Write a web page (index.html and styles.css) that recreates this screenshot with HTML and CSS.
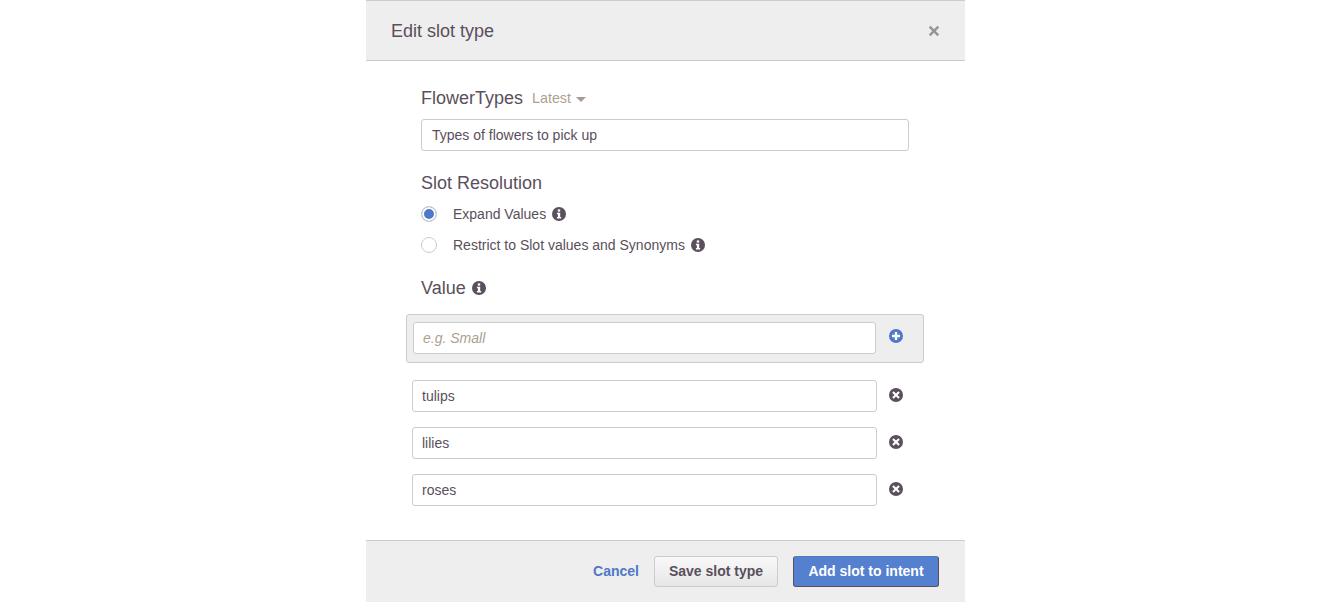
FILE: index.html
```html
<!DOCTYPE html>
<html lang="en">
<head>
<meta charset="utf-8">
<title>Edit slot type</title>
<link rel="stylesheet" href="styles.css">
</head>
<body>
<svg class="defs" width="0" height="0" aria-hidden="true">
  <symbol id="info" viewBox="0 0 14 14">
    <circle cx="7" cy="7" r="7" fill="currentColor"/>
    <rect x="5.8" y="2.4" width="2.4" height="2.2" fill="#fff"/>
    <path d="M4.9 5.7h3.3v4.2h1v1.5H4.9V9.9h1V7.2h-1z" fill="#fff"/>
  </symbol>
  <symbol id="plus" viewBox="0 0 14 14">
    <circle cx="7" cy="7" r="7" fill="currentColor"/>
    <path d="M5.8 3h2.4v2.8H11v2.4H8.200V11H5.800V8.200H3V5.800h2.800z" fill="#fff"/>
  </symbol>
  <symbol id="times" viewBox="0 0 14 14">
    <circle cx="7" cy="7" r="7" fill="currentColor"/>
    <path d="M4.700 3.200L7 5.500l2.300-2.300 1.500 1.500L8.500 7l2.300 2.300-1.500 1.500L7 8.500l-2.300 2.300-1.500-1.500L5.500 7 3.200 4.700z" fill="#fff"/>
  </symbol>
</svg>
<div class="modal">
  <header class="modal-header">
    <h1 class="modal-title">Edit slot type</h1>
    <svg class="close" viewBox="0 0 12 12" aria-label="Close"><path d="M2.600.8L6 4.200 9.400.8l1.800 1.800L7.800 6l3.400 3.400-1.800 1.800L6 7.800l-3.400 3.400-1.800-1.800L4.200 6 .8 2.600z"/></svg>
  </header>
  <main class="modal-body">
    <div class="name-row">
      <span class="heading">FlowerTypes</span>
      <span class="version">Latest</span>
      <span class="caret"></span>
    </div>
    <input class="field desc" type="text" value="Types of flowers to pick up">
    <div class="heading res-heading">Slot Resolution</div>
    <label class="radio-row first">
      <span class="radio checked"></span>
      <span>Expand Values</span>
      <svg class="icon info"><use href="#info"/></svg>
    </label>
    <label class="radio-row">
      <span class="radio"></span>
      <span>Restrict to Slot values and Synonyms</span>
      <svg class="icon info"><use href="#info"/></svg>
    </label>
    <div class="value-heading">
      <span class="heading">Value</span>
      <svg class="icon info"><use href="#info"/></svg>
    </div>
    <div class="add-box">
      <input class="field value" type="text" placeholder="e.g. Small">
      <svg class="icon plus"><use href="#plus"/></svg>
    </div>
    <ul class="values">
      <li class="value-row"><input class="field value" type="text" value="tulips"><svg class="icon times"><use href="#times"/></svg></li>
      <li class="value-row"><input class="field value" type="text" value="lilies"><svg class="icon times"><use href="#times"/></svg></li>
      <li class="value-row"><input class="field value" type="text" value="roses"><svg class="icon times"><use href="#times"/></svg></li>
    </ul>
  </main>
  <footer class="modal-footer">
    <a class="cancel">Cancel</a>
    <button class="btn btn-default" type="button">Save slot type</button>
    <button class="btn btn-primary" type="button">Add slot to intent</button>
  </footer>
</div>
</body>
</html>
```
FILE: styles.css
```css
* { box-sizing: border-box; }
html, body { margin: 0; height: 100%; }
body {
  background: #fff;
  color: #5a4f5c;
  font-family: "Liberation Sans", Arial, sans-serif;
  font-size: 14px;
  overflow: hidden;
}
.defs { position: absolute; }
.modal {
  width: 599px;
  height: 602px;
  margin-left: 366px;
  display: flex;
  flex-direction: column;
}
.modal-header {
  height: 61px;
  flex: none;
  background: #eee;
  border-top: 1px solid #ccc;
  border-bottom: 1px solid #ccc;
  padding: 0 25px;
  display: flex;
  align-items: center;
  justify-content: space-between;
}
.modal-title {
  margin: 2px 0 0;
  font-size: 18px;
  font-weight: 400;
  color: #5a4f5c;
}
.close { width: 12px; height: 12px; fill: #9b9399; }
.modal-body { flex: 1; padding: 27px 0 0 55px; }
.name-row { display: flex; align-items: center; height: 20px; }
.heading { font-size: 18px; line-height: 20px; color: #5a4f5c; }
.version { margin-left: 9px; color: #ad9f90; font-size: 14.300px; }
.caret {
  margin-left: 5px;
  margin-top: 2px;
  border-left: 5px solid transparent;
  border-right: 5px solid transparent;
  border-top: 5px solid #a79a94;
}
.field {
  display: block;
  height: 32px;
  border: 1px solid #ccc;
  border-radius: 3px;
  background: #fff;
  padding: 0 10px;
  font: 14px "Liberation Sans", Arial, sans-serif;
  color: #5a4f5c;
  outline: none;
}
.field::placeholder { color: #ad9f90; font-style: italic; opacity: 1; }
.desc { width: 488px; margin-top: 11px; }
.res-heading { margin-top: 22px; }
.radio-row { display: flex; align-items: center; height: 31px; }
.radio-row.first { margin-top: 5px; }
.radio {
  width: 16px;
  height: 16px;
  border-radius: 50%;
  border: 1px solid #ccc;
  background: #fff;
  margin-right: 16px;
}
.radio.checked { background: #4f78c8; box-shadow: inset 0 0 0 2px #fff; }
.icon { display: block; flex: none; width: 14px; height: 14px; }
.info { color: #5a4f5c; margin-left: 6px; }
.value-heading { display: flex; align-items: center; margin-top: 18px; height: 20px; }
.add-box {
  width: 518px;
  height: 49px;
  margin: 16px 0 0 -15px;
  padding: 7px 6px;
  background: #eee;
  border: 1px solid #ccc;
  border-radius: 3px;
  display: flex;
}
.value { width: 463px; padding-left: 9px; }
.plus { color: #4f78c8; margin: 7px 0 0 13px; }
.values { list-style: none; margin: 17px 0 0 -9px; padding: 0; display: flex; flex-direction: column; gap: 15px; }
.value-row { display: flex; }
.value-row .value { width: 465px; }
.times { color: #5a4f5c; margin: 8px 0 0 12px; }
.modal-footer {
  height: 62px;
  flex: none;
  background: #eee;
  border-top: 1px solid #ccc;
  padding: 0 26px 1px 0;
  display: flex;
  align-items: center;
  justify-content: flex-end;
}
.cancel { color: #4f78c8; font-weight: 700; font-size: 14px; margin-right: 15px; }
.btn {
  height: 31px;
  border-radius: 3px;
  font: 700 14px "Liberation Sans", Arial, sans-serif;
  padding: 0;
}
.btn-default {
  width: 124px;
  margin-right: 15px;
  color: #5a4f5c;
  border: 1px solid #ccc;
  background: linear-gradient(#f9f9f9, #e6e6e6);
}
.btn-primary {
  width: 146px;
  color: #fff;
  background: #5580cf;
  border: 1px solid #5a4f5c;
  border-color: #4f78c8 #5a4f5c #5a4f5c #5a4f5c;
}
```
